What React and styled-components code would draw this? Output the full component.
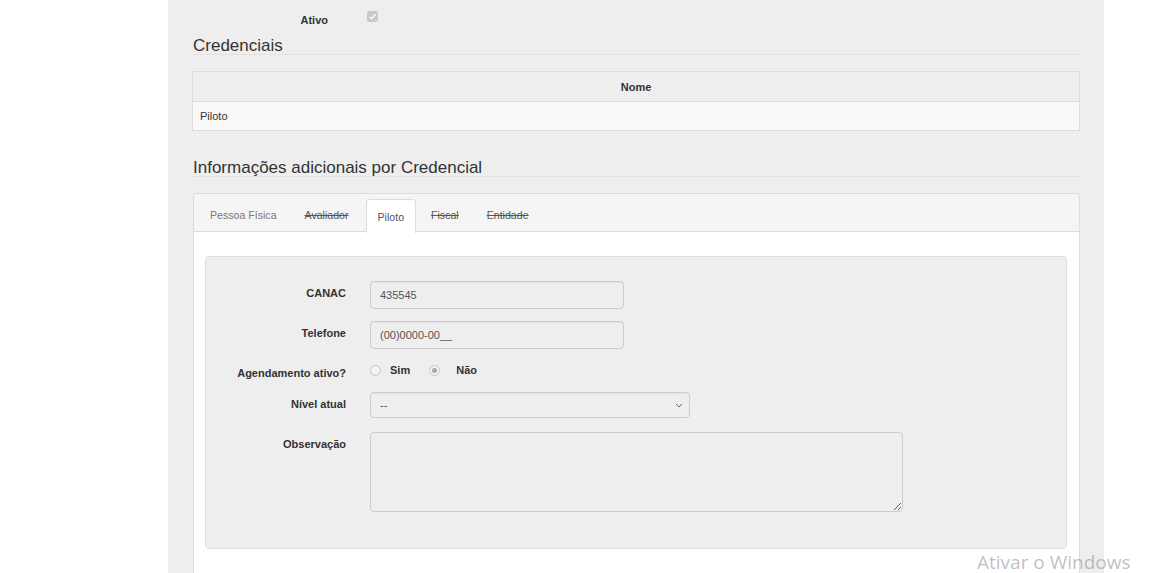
import React from "react";
import styled, { createGlobalStyle } from "styled-components";

const GlobalStyle = createGlobalStyle`
  html, body {
    margin: 0;
    padding: 0;
    background: #ffffff;
    font-family: "Liberation Sans", Arial, sans-serif;
    color: #333333;
    overflow: hidden;
  }
`;

const Page = styled.div`
  display: flex;
  min-height: 100vh;
  position: relative;
`;

const Spacer = styled.div`
  width: 168px;
  flex-shrink: 0;
`;

const Panel = styled.main`
  width: 887px;
  padding: 0 24px 0 25px;
  background: #eeeeee;
  min-height: 573px;
`;

const CheckRow = styled.div`
  display: flex;
  align-items: center;
  padding-top: 11px;
  height: 16px;
`;

const CheckLabel = styled.span`
  width: 135px;
  text-align: right;
  font-size: 11px;
  font-weight: bold;
  line-height: 14px;
  padding-top: 2px;
`;

const CheckBox = styled.span`
  margin-left: 39px;
  margin-top: -6px;
  width: 11px;
  height: 11px;
  border-radius: 2px;
  background: #c9c9c9;
  display: flex;
  align-items: center;
  justify-content: center;
`;

const Heading = styled.h3`
  margin: ${p => p.$top}px 0 0 0;
  padding-top: 2px;
  font-size: 17px;
  font-weight: normal;
  line-height: 17px;
  height: 17px;
  color: #333333;
  border-bottom: 1px solid #e2e2e2;
`;

const Table = styled.table`
  width: 888px;
  margin: 16px 0 0 -1px;
  border-collapse: collapse;
  font-size: 11px;
`;

const Th = styled.th`
  height: 29px;
  padding: 0;
  background: #eeeeee;
  border: 1px solid #dddddd;
  font-weight: bold;
  color: #333333;
`;

const Td = styled.td`
  height: 28px;
  padding: 0 0 0 7px;
  background: #f9f9f9;
  border: 1px solid #dddddd;
  color: #333333;
`;

const TabPanel = styled.section`
  margin-top: 16px;
  border: 1px solid #dddddd;
  border-bottom: none;
  border-radius: 4px 4px 0 0;
  background: #ffffff;
`;

const TabList = styled.ul`
  display: flex;
  list-style: none;
  margin: 0;
  padding: 4px 0 0 3px;
  height: 33px;
  background: #f5f5f5;
  border-bottom: 1px solid #dddddd;
  border-radius: 4px 4px 0 0;
`;

const Tab = styled.li`
  height: ${p => (p.$active ? 33 : 32)}px;
  padding: 0 ${p => (p.$active ? 11 : 12)}px;
  margin-right: ${p => (p.$before ? 4 : 2)}px;
  display: flex;
  align-items: center;
  font-size: 10.6px;
  color: ${p => (p.$active ? "#4a5570" : p.$off ? "#555555" : "#777777")};
  text-decoration: ${p => (p.$off ? "line-through" : "none")};
  border: 1px solid ${p => (p.$active ? "#dddddd" : "transparent")};
  border-bottom: none;
  border-radius: 4px 4px 0 0;
  background: ${p => (p.$active ? "#ffffff" : "transparent")};
  position: relative;
  top: ${p => (p.$active ? 1 : 0)}px;
`;

const TabBody = styled.div`
  padding: 24px 12px 40px 11px;
`;

const Well = styled.div`
  background: #eeeeee;
  border: 1px solid #dddddd;
  border-radius: 4px;
  padding: 24px 0 36px 0;
`;

const FormRow = styled.div`
  display: flex;
  margin-bottom: ${p => p.$gap}px;
`;

const Label = styled.label`
  width: 140px;
  flex-shrink: 0;
  text-align: right;
  font-size: 11px;
  font-weight: bold;
  line-height: 14px;
  padding-top: 5px;
  color: #333333;
`;

const Control = styled.div`
  margin-left: 24px;
  display: flex;
  align-items: flex-start;
`;

const Input = styled.div`
  width: ${p => p.$w}px;
  height: ${p => p.$h}px;
  box-sizing: border-box;
  border: 1px solid #cccccc;
  border-radius: 4px;
  background: #eeeeee;
  font-size: 11px;
  color: #555555;
  padding: 0 6px 0 9px;
  display: flex;
  align-items: center;
  justify-content: space-between;
  box-shadow: inset 0 1px 1px rgba(0, 0, 0, 0.04);
`;

const TextArea = styled.textarea`
  width: 533px;
  height: 80px;
  box-sizing: border-box;
  border: 1px solid #cccccc;
  border-radius: 4px;
  background: #eeeeee;
  font-family: inherit;
  font-size: 11px;
  margin: 0;
  resize: both;
  outline: none;
`;

const RadioGroup = styled.div`
  display: flex;
  align-items: center;
  padding-top: 3px;
`;

const Radio = styled.span`
  width: 9px;
  height: 9px;
  border-radius: 50%;
  border: 1px solid #c4c4c4;
  background: #f3f3f3;
  margin: 0 ${p => p.$after}px 0 ${p => p.$before}px;
  display: flex;
  align-items: center;
  justify-content: center;
  &::after {
    content: "";
    width: 5px;
    height: 5px;
    border-radius: 50%;
    background: ${p => (p.$checked ? "#a8a8a8" : "transparent")};
  }
`;

const RadioText = styled.span`
  font-size: 11px;
  font-weight: bold;
  color: #333333;
`;

const Watermark = styled.div`
  position: absolute;
  left: 977px;
  top: 552px;
  font-family: "Open Sans", "Noto Sans", sans-serif;
  font-size: 19px;
  line-height: 20px;
  color: rgba(150, 150, 150, 0.6);
  white-space: nowrap;
  pointer-events: none;
`;

export default function App() {
  return (
    <Page>
      <GlobalStyle />
      <Spacer />
      <Panel>
        <CheckRow>
          <CheckLabel>Ativo</CheckLabel>
          <CheckBox>
            <svg width="9" height="9" viewBox="0 0 9 9">
              <path d="M1.5 4.6 L3.6 6.6 L7.6 2.2" fill="none" stroke="#ffffff" strokeWidth="1.3" />
            </svg>
          </CheckBox>
        </CheckRow>

        <Heading $top={8}>Credenciais</Heading>
        <Table>
          <thead>
            <tr>
              <Th>Nome</Th>
            </tr>
          </thead>
          <tbody>
            <tr>
              <Td>Piloto</Td>
            </tr>
          </tbody>
        </Table>

        <Heading $top={26}>Informações adicionais por Credencial</Heading>

        <TabPanel>
          <TabList>
            <Tab>Pessoa Física</Tab>
            <Tab $off $before>Avaliador</Tab>
            <Tab $active>Piloto</Tab>
            <Tab $off>Fiscal</Tab>
            <Tab $off>Entidade</Tab>
          </TabList>
          <TabBody>
            <Well>
              <FormRow $gap={12}>
                <Label>CANAC</Label>
                <Control>
                  <Input $w={254} $h={28}>435545</Input>
                </Control>
              </FormRow>
              <FormRow $gap={12}>
                <Label>Telefone</Label>
                <Control>
                  <Input $w={254} $h={28}>(00)0000-00__</Input>
                </Control>
              </FormRow>
              <FormRow $gap={12}>
                <Label>Agendamento ativo?</Label>
                <Control>
                  <RadioGroup>
                    <Radio $before={0} $after={9} />
                    <RadioText>Sim</RadioText>
                    <Radio $before={19} $after={16} $checked />
                    <RadioText>Não</RadioText>
                  </RadioGroup>
                </Control>
              </FormRow>
              <FormRow $gap={14}>
                <Label>Nível atual</Label>
                <Control>
                  <Input $w={320} $h={26}>
                    <span>--</span>
                    <svg width="8" height="5" viewBox="0 0 8 5">
                      <path d="M1 1 L4 4 L7 1" fill="none" stroke="#666666" strokeWidth="1" />
                    </svg>
                  </Input>
                </Control>
              </FormRow>
              <FormRow $gap={0}>
                <Label>Observação</Label>
                <Control>
                  <TextArea readOnly />
                </Control>
              </FormRow>
            </Well>
          </TabBody>
        </TabPanel>
      </Panel>
      <Watermark>Ativar o Windows</Watermark>
    </Page>
  );
}
